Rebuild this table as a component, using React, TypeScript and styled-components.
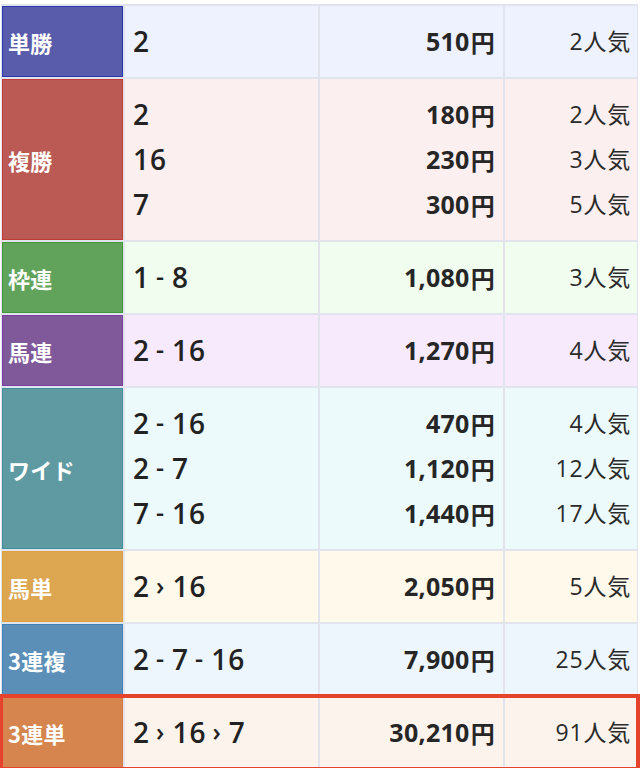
import React from "react";
import styled, { createGlobalStyle } from "styled-components";

const Global = createGlobalStyle`
  html, body { margin: 0; padding: 0; background: #ffffff; }
  body { font-family: "Open Sans", "Noto Sans CJK JP", sans-serif; color: #222; }
`;

const Table = styled.div`
  margin: 4px 2px 0 1px;
  padding: 2px 1px 0 1px;
  background: #e1e4ec;
  display: flex;
  flex-direction: column;
  gap: 2px;
`;

const Row = styled.div<{ $bg: string; $hl?: boolean }>`
  display: grid;
  grid-template-columns: 121px 193px 183px 1fr;
  column-gap: 2px;
  position: relative;
  background: #e1e4ec;
  & > div:not(:first-child) { background: ${(p) => p.$bg}; }
  ${(p) => (p.$hl ? `outline: 4px solid #e5432b; outline-offset: -1px; z-index: 1;` : "")}
`;

const Label = styled.div<{ $c: string; $b: string }>`
  background: ${(p) => p.$c};
  border: 1px solid ${(p) => p.$b};
  display: flex;
  align-items: center;
  padding: 0 5px;
  color: #fff;
  font-family: "Noto Sans CJK JP", "Open Sans", sans-serif;
  font-weight: 700;
  font-size: 22px;
  letter-spacing: 0.3px;
`;

const Cell = styled.div<{ $align?: "left" | "right" }>`
  padding: 13px 8px;
  display: flex;
  flex-direction: column;
  align-items: ${(p) => (p.$align === "right" ? "flex-end" : "flex-start")};
`;

const Line = styled.div`
  height: 45px;
  line-height: 45px;
  display: flex;
  align-items: center;
  white-space: pre;
`;

const Num = styled(Line)`
  font-family: "Open Sans", sans-serif;
  font-size: 28px;
  font-weight: 600;
  color: #222;
  letter-spacing: 1px;
`;

const Sep = styled.span`
  font-size: 25px;
  margin: 0 7px 0 6px;
  position: relative;
  top: -1px;
`;

const Pay = styled(Line)`
  font-family: "Open Sans", sans-serif;
  font-size: 25px;
  font-weight: 700;
  color: #262626;
  letter-spacing: 0.3px;
`;

const Yen = styled.span`
  font-family: "Noto Sans CJK JP", sans-serif;
  font-weight: 700;
  font-size: 24px;
  margin-left: 1px;
`;

const Pop = styled(Line)`
  font-family: "Open Sans", "Noto Sans CJK JP", sans-serif;
  font-size: 23px;
  font-weight: 400;
  color: #2a2a2a;
  letter-spacing: 0.8px;
  margin-right: -2px;
`;

type Entry = { combo: string[]; pay: string; pop: string };
type Bet = { name: string; color: string; border: string; bg: string; entries: Entry[]; hl?: boolean };

const data: Bet[] = [
  { name: "単勝", color: "#585cab", border: "#2a36b0", bg: "#eef2fe", entries: [{ combo: ["2"], pay: "510", pop: "2" }] },
  {
    name: "複勝", color: "#bb5a55", border: "#c43a36", bg: "#fcefef",
    entries: [
      { combo: ["2"], pay: "180", pop: "2" },
      { combo: ["16"], pay: "230", pop: "3" },
      { combo: ["7"], pay: "300", pop: "5" },
    ],
  },
  { name: "枠連", color: "#62a35c", border: "#3f9a36", bg: "#f1fdef", entries: [{ combo: ["1", "-", "8"], pay: "1,080", pop: "3" }] },
  { name: "馬連", color: "#80599a", border: "#7a3fa0", bg: "#f6eafc", entries: [{ combo: ["2", "-", "16"], pay: "1,270", pop: "4" }] },
  {
    name: "ワイド", color: "#5f9aa3", border: "#3f8e9a", bg: "#ecfafb",
    entries: [
      { combo: ["2", "-", "16"], pay: "470", pop: "4" },
      { combo: ["2", "-", "7"], pay: "1,120", pop: "12" },
      { combo: ["7", "-", "16"], pay: "1,440", pop: "17" },
    ],
  },
  { name: "馬単", color: "#dda650", border: "#e0a040", bg: "#fef9ea", entries: [{ combo: ["2", "›", "16"], pay: "2,050", pop: "5" }] },
  { name: "3連複", color: "#5b8fb8", border: "#3f82b8", bg: "#edf5fd", entries: [{ combo: ["2", "-", "7", "-", "16"], pay: "7,900", pop: "25" }] },
  { name: "3連単", color: "#d6854e", border: "#d8783a", bg: "#fcf4ec", hl: true, entries: [{ combo: ["2", "›", "16", "›", "7"], pay: "30,210", pop: "91" }] },
];

const Combo: React.FC<{ parts: string[] }> = ({ parts }) => (
  <Num>
    {parts.map((p, i) => (p === "-" || p === "›" ? <Sep key={i}>{p}</Sep> : <span key={i}>{p}</span>))}
  </Num>
);

export default function App() {
  return (
    <>
      <Global />
      <Table>
        {data.map((b) => (
          <Row key={b.name} $bg={b.bg} $hl={b.hl}>
            <Label $c={b.color} $b={b.border}>{b.name}</Label>
            <Cell>
              {b.entries.map((e, i) => (
                <Combo key={i} parts={e.combo} />
              ))}
            </Cell>
            <Cell $align="right">
              {b.entries.map((e, i) => (
                <Pay key={i}>
                  {e.pay}
                  <Yen>円</Yen>
                </Pay>
              ))}
            </Cell>
            <Cell $align="right">
              {b.entries.map((e, i) => (
                <Pop key={i}>{e.pop}人気</Pop>
              ))}
            </Cell>
          </Row>
        ))}
      </Table>
    </>
  );
}
